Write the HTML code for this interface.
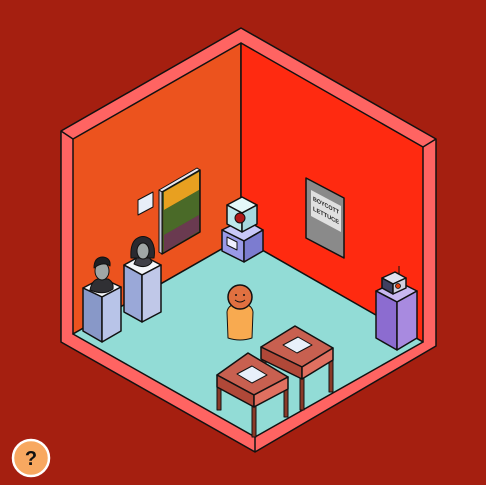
<!DOCTYPE html>
<html><head><meta charset="utf-8"><style>
html,body{margin:0;padding:0;background:#a51f10;}
svg{display:block}
</style></head><body>
<svg width="486" height="485" viewBox="0 0 486 485" xmlns="http://www.w3.org/2000/svg" font-family="Liberation Sans, sans-serif">
<rect width="486" height="485" fill="#a51f10"/>
<g stroke="#111" stroke-width="1.5" stroke-linejoin="round">
<polygon points="241,28 436,139 436,346 255,452 61,342 61,131" fill="#ff6462"/>
<line x1="255" y1="437" x2="255" y2="452"/>
<line x1="61" y1="131" x2="73" y2="139"/>
<line x1="436" y1="139" x2="423" y2="147"/>
<polygon points="73,139 241,43 241,238 73,334" fill="#ec531e"/>
<polygon points="241,43 423,147 423,342 241,238" fill="#ff2a10"/>
<polygon points="241,238 423,342 255,437 73,334" fill="#92dcd6"/>

<polygon points="138,200 153,192 153,207 138,215" fill="#e8eef8" stroke-width="1"/>
<polygon points="159,190 197,168 200,170 162,192" fill="#e8e8f0" stroke-width="1"/>
<polygon points="162,192 200,170 200,232 162,254" fill="#4a5a20"/>
<polygon points="164,192 199,172 199,190 164,210" fill="#e8a020" stroke="none"/>
<polygon points="164,210 199,190 199,215 164,235" fill="#4a6a28" stroke="none"/>
<polygon points="164,235 199,215 199,231 164,252" fill="#6a3a50" stroke="none"/>
<polygon points="159,190 162,192 162,254 159,252" fill="#c8c8d8" stroke-width="1"/>

<polygon points="222,230 244,219 263,230 244,241" fill="#c8c8f8"/>
<polygon points="222,230 244,241 244,262 222,251" fill="#9a9ae8"/>
<polygon points="244,241 263,230 263,251 244,262" fill="#7c7cd0"/>
<polygon points="227,237 237,242 237,250 227,245" fill="#eef" stroke-width="1"/>
<polygon points="227,205 242,197 257,205 242,213" fill="#e4f8f8"/>
<polygon points="227,205 242,213 242,232 227,224" fill="#bde8ec"/>
<polygon points="242,213 257,205 257,224 242,232" fill="#a6d8e0"/>
<circle cx="240" cy="218" r="5" fill="#b01818" stroke-width="1"/>

<polygon points="306,178 344,198 344,258 306,238" fill="#8a8a8a"/>
<polygon points="311,190 341,206 341,232 311,216" fill="#e0e0e0" stroke="none"/>
<text x="313" y="204" font-size="6" font-weight="bold" fill="#222" stroke="none" textLength="26" lengthAdjust="spacingAndGlyphs" transform="skewY(28) translate(0,-170)">BOYCOTT</text>
<text x="313" y="214" font-size="6" font-weight="bold" fill="#222" stroke="none" textLength="26" lengthAdjust="spacingAndGlyphs" transform="skewY(28) translate(0,-170)">LETTUCE</text>

<polygon points="376,291 397,281 417,291 397,302" fill="#c8b8f0"/>
<polygon points="376,291 397,302 397,350 376,338" fill="#8c6cd0"/>
<polygon points="397,302 417,291 417,338 397,350" fill="#a88ae0"/>
<line x1="399" y1="266" x2="399" y2="283" stroke-width="1"/>
<polygon points="382,278 395,272 406,278 393,284" fill="#e0e0f0"/>
<polygon points="382,278 393,284 393,294 382,288" fill="#404060"/>
<polygon points="393,284 406,278 406,288 393,294" fill="#d0d0e0"/>
<circle cx="398" cy="286" r="2.5" fill="#e04010" stroke-width="0.8"/>

<polygon points="124,265 142,255 161,265 142,275" fill="#f4f6fa"/>
<polygon points="124,265 142,275 142,322 124,312" fill="#9aa8d8"/>
<polygon points="142,275 161,265 161,312 142,322" fill="#c0c8e8"/>
<path d="M134,264 L137,257 L149,257 L152,262 Q146,270 134,264Z" fill="#404048" stroke-width="1"/>
<path d="M131,258 Q130,244 136,239 Q143,234 150,239 Q156,246 154,258 L149,258 L137,258Z" fill="#2a2a30" stroke-width="1"/>
<ellipse cx="143" cy="251" rx="6" ry="8" fill="#a0a6a6" stroke-width="1"/>
<polygon points="83,288 102,278 121,287 102,297" fill="#f4f6fa"/>
<polygon points="83,288 102,297 102,342 83,331" fill="#8898c8"/>
<polygon points="102,297 121,287 121,331 102,342" fill="#b8c4e8"/>
<path d="M90,290 Q92,280 98,279 L108,279 Q114,282 113,289 Q104,296 90,290Z" fill="#303034" stroke-width="1"/>
<ellipse cx="102" cy="271" rx="7" ry="9" fill="#a0a6a6" stroke-width="1"/>
<path d="M94,268 Q94,257 103,257 Q111,258 110,266 Q103,261 94,268Z" fill="#202024" stroke-width="1"/>

<path d="M228,338 L227,312 Q228,304 240,303 Q252,304 253,312 L252,338 Q240,342 228,338Z" fill="#f8aa50" stroke-width="1"/>
<circle cx="240" cy="297" r="12" fill="#e07040"/>
<circle cx="236" cy="295" r="1" fill="#111" stroke="none"/>
<circle cx="244" cy="295" r="1" fill="#111" stroke="none"/>
<path d="M235,300 Q240,304 245,300" fill="none" stroke-width="1"/>

<g stroke-width="1"><rect x="262" y="356" width="4" height="32" fill="#8a3a28"/><rect x="300" y="376" width="4" height="34" fill="#8a3a28"/><rect x="329" y="358" width="4" height="34" fill="#8a3a28"/></g>
<polygon points="261,347 295,326 333,348 302,367" fill="#c86050"/>
<polygon points="261,347 302,367 302,379 261,359" fill="#b04838"/>
<polygon points="302,367 333,348 333,360 302,379" fill="#e07060"/>
<polygon points="283,345 298,337 312,345 297,353" fill="#e8f0fa" stroke-width="1"/>
<g stroke-width="1"><rect x="217" y="384" width="4" height="26" fill="#8a3a28"/><rect x="252" y="404" width="4" height="33" fill="#8a3a28"/><rect x="284" y="386" width="4" height="31" fill="#8a3a28"/></g>
<polygon points="217,375 248,353 288,377 254,395" fill="#c86050"/>
<polygon points="217,375 254,395 254,407 217,387" fill="#b04838"/>
<polygon points="254,395 288,377 288,389 254,407" fill="#e07060"/>
<polygon points="237,374 252,366 267,375 252,383" fill="#e8f0fa" stroke-width="1"/>
</g>
<circle cx="31" cy="458" r="18" fill="#f8a860" stroke="#fff" stroke-width="2.5"/>
<text x="31" y="465" font-size="20" font-weight="bold" text-anchor="middle" fill="#111">?</text>
</svg>
</body></html>
